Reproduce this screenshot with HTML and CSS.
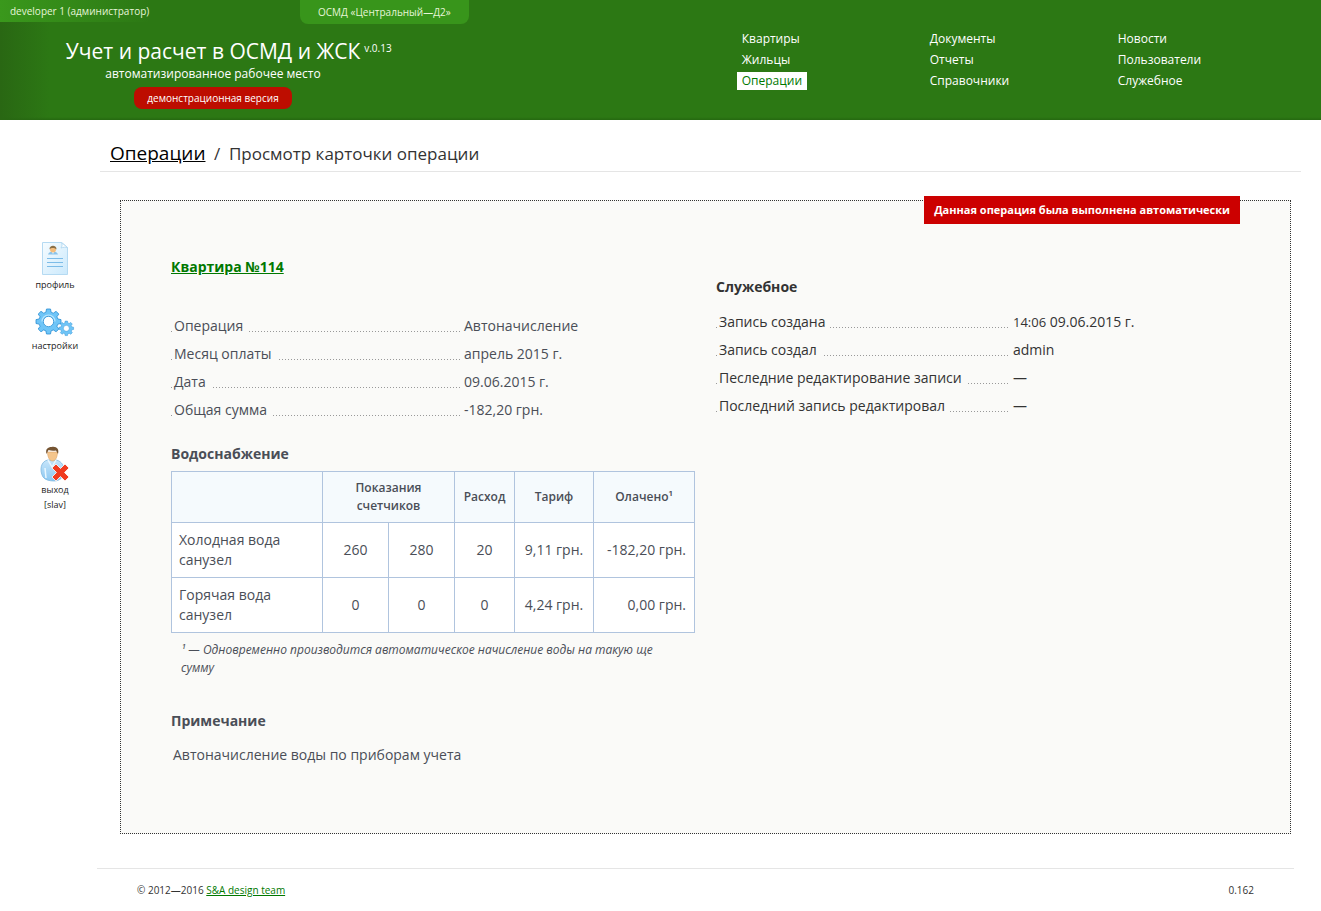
FILE: index.html
```html
<!DOCTYPE html>
<html lang="ru">
<head>
    <meta charset="UTF-8">
    <meta name="viewport" content="width=device-width, initial-scale=1.0">
    <title>Просмотр карточки операции</title>
    <link rel="stylesheet" href="styles.css">
</head>
<body>
    <header class="header">
        <div class="brand-side">
            <div class="topline">
                <div class="user">developer 1 (администратор)</div>
                <div class="company">ОСМД «Центральный—Д2»</div>
            </div>
            <div class="brand">
                <div class="title">Учет и расчет в ОСМД и ЖСК<sup class="version">v.0.13</sup></div>
                <div class="subtitle">автоматизированное рабочее место</div>
                <div class="demo">демонстрационная версия</div>
            </div>
        </div>
        <nav class="nav">
            <ul>
                <li><a href="#">Квартиры</a></li>
                <li><a href="#">Жильцы</a></li>
                <li><a href="#" class="active">Операции</a></li>
            </ul>
            <ul>
                <li><a href="#">Документы</a></li>
                <li><a href="#">Отчеты</a></li>
                <li><a href="#">Справочники</a></li>
            </ul>
            <ul>
                <li><a href="#">Новости</a></li>
                <li><a href="#">Пользователи</a></li>
                <li><a href="#">Служебное</a></li>
            </ul>
        </nav>
    </header>

    <div class="page">
        <aside class="sidebar">
            <a href="#" class="side-link">
                <svg width="28" height="36" viewBox="0 0 28 36">
                    <defs>
                        <linearGradient id="sheet" x1="0" y1="0" x2="1" y2="1">
                            <stop offset="0" stop-color="#f6fcff"/>
                            <stop offset="1" stop-color="#cbe9fc"/>
                        </linearGradient>
                    </defs>
                    <path d="M1.500 1.500h19l6 5v27h-25z" fill="url(#sheet)" stroke="#b5daf2"/>
                    <path d="M20.500 1.500c1 2 .5 4-.5 5.500 2-.8 4.500-1 6.500-.5z" fill="#fff" stroke="#b5daf2"/>
                    <path d="M7 13.500c.5-2 2.500-3 5-3s4.500 1 5 3z" fill="#8cc4ea"/>
                    <path d="M11 11h2l-1 2z" fill="#fff"/>
                    <circle cx="12" cy="8.500" r="3" fill="#f3bd7d"/>
                    <path d="M8.500 8.500c-.5-5 7.500-5 7 0-1-1.500-5-2.500-7 0z" fill="#8a7048"/>
                    <path d="M6 17.500h16M6 21.500h16M6 25.500h16" stroke="#7cbce8"/>
                </svg>
                <span>профиль</span>
            </a>
            <a href="#" class="side-link">
                <svg width="40" height="30" viewBox="0 0 40 30">
                    <g fill="#6fc5f7" stroke="#2a8ed3" stroke-width=".8">
                        <path id="gear" fill-rule="evenodd" d="M11.500 1h4l.6 3.200 2.200 1 2.800-1.900 2.700 2.800-1.900 2.700 1 2.200 3.100.6v3.900l-3.100.6-1 2.200 1.900 2.700-2.700 2.800-2.800-1.900-2.200 1-.6 3.100h-4l-.6-3.100-2.200-1-2.700 1.900L3.200 21l1.900-2.700-1-2.200-3.100-.6v-3.900l3.100-.6 1-2.200L3.200 6.100 6 3.300l2.700 1.900 2.200-1zM13.500 8.300a5.200 5.200 0 1 0 0 10.400 5.200 5.200 0 0 0 0-10.400z"/>
                        <use href="#gear" transform="translate(23.500 12.500) scale(.58)"/>
                    </g>
                    <path d="M7 13.500a6.500 6.500 0 0 1 13 0" fill="none" stroke="#b9e5fd" stroke-width="1.200"/>
                </svg>
                <span>настройки</span>
            </a>
            <a href="#" class="side-link exit">
                <svg width="30" height="36" viewBox="0 0 30 36">
                    <defs>
                        <linearGradient id="coat" x1="0" y1="0" x2="0" y2="1">
                            <stop offset="0" stop-color="#c6e5fa"/>
                            <stop offset="1" stop-color="#8cc8f2"/>
                        </linearGradient>
                    </defs>
                    <path d="M3 31C-1 24 1 15 8 14h8c6 1 9 7 8 13-1 5-5 8-10 8-4 0-9-1-11-4z" fill="url(#coat)" stroke="#80b9df" stroke-width=".8"/>
                    <path d="M5 22l1 10M8 14l4 7 4-7" fill="none" stroke="#e9f7ff" stroke-width="1.500"/>
                    <path d="M7.500 6c0 5 2 9 5 9s5-4 5-9z" fill="#f4c58c" stroke="#d99b5b" stroke-width=".5"/>
                    <path d="M6.500 8C5 3 8 1 11.500 1c5-1 8 2 6.500 7l-2-3.500c-3 .5-5 .3-7.500-.5z" fill="#755432"/>
                    <path d="M12 22l4-4 4.500 4.500L25 18l4 4-4.500 4.500L29 31l-4 4-4.500-4.500L16 35l-4-4 4.500-4.500z" fill="#f03b20" stroke="#fff" stroke-width=".8"/>
                </svg>
                <span>выход<br>[slav]</span>
            </a>
        </aside>

        <main class="main">
            <h1 class="breadcrumbs"><a href="#">Операции</a> <span>/&nbsp; Просмотр карточки операции</span></h1>

            <div class="card">
                <div class="notice">Данная операция была выполнена автоматически</div>

                <section class="operation">
                    <h2 class="flat"><a href="#">Квартира №114</a></h2>
                    <dl class="props">
                        <div><dt><span>Операция</span></dt><dd>Автоначисление</dd></div>
                        <div><dt><span>Месяц оплаты</span></dt><dd>апрель 2015 г.</dd></div>
                        <div><dt><span>Дата</span></dt><dd>09.06.2015 г.</dd></div>
                        <div><dt><span>Общая сумма</span></dt><dd>-182,20 грн.</dd></div>
                    </dl>

                    <h2>Водоснабжение</h2>
                    <table class="water">
                        <colgroup>
                            <col class="c-name"><col class="c-meter"><col class="c-meter">
                            <col class="c-use"><col class="c-rate"><col class="c-paid">
                        </colgroup>
                        <thead>
                            <tr>
                                <th></th>
                                <th colspan="2">Показания<br>счетчиков</th>
                                <th>Расход</th>
                                <th>Тариф</th>
                                <th>Олачено¹</th>
                            </tr>
                        </thead>
                        <tbody>
                            <tr>
                                <td class="name">Холодная вода<br>санузел</td>
                                <td>260</td>
                                <td>280</td>
                                <td>20</td>
                                <td>9,11 грн.</td>
                                <td class="sum">-182,20 грн.</td>
                            </tr>
                            <tr>
                                <td class="name">Горячая вода<br>санузел</td>
                                <td>0</td>
                                <td>0</td>
                                <td>0</td>
                                <td>4,24 грн.</td>
                                <td class="sum">0,00 грн.</td>
                            </tr>
                        </tbody>
                    </table>
                    <p class="footnote">¹ — Одновременно производится автоматическое начисление воды на такую ще сумму</p>

                    <h2>Примечание</h2>
                    <p class="note">Автоначисление воды по приборам учета</p>
                </section>

                <section class="service">
                    <h2>Служебное</h2>
                    <dl class="props">
                        <div><dt><span>Запись создана</span></dt><dd><small>14:06</small> 09.06.2015 г.</dd></div>
                        <div><dt><span>Запись создал</span></dt><dd>admin</dd></div>
                        <div><dt><span>Песледние редактирование записи</span></dt><dd>—</dd></div>
                        <div><dt><span>Последний запись редактировал</span></dt><dd>—</dd></div>
                    </dl>
                </section>
            </div>
        </main>
    </div>

    <footer class="footer">
        <div>© 2012—2016 <a href="#">S&amp;A design team</a></div>
        <div>0.162</div>
    </footer>
</body>
</html>
```
FILE: styles.css
```css
* {
    box-sizing: border-box;
    margin: 0;
    padding: 0;
}

body {
    font-family: "Trebuchet MS", "Open Sans", "Noto Sans", sans-serif;
    font-size: 14px;
    line-height: 20px;
    color: #333;
    background: #fff;
}

ul {
    list-style: none;
}

/* header */
.header {
    display: flex;
    min-height: 120px;
    color: #fff;
    background: linear-gradient(to right, #296713, rgba(44, 120, 20, 0) 50px),
        linear-gradient(to top, #256810, rgba(44, 120, 20, 0) 3px), #2c7814;
}

.brand-side {
    width: 56%;
}

.topline {
    display: flex;
    align-items: flex-start;
    height: 38px;
    font-size: 10px;
    color: #e6f5d8;
}

.user {
    width: 300px;
    height: 22px;
    padding-left: 10px;
    line-height: 22px;
    background: linear-gradient(to right, #3a981c, #2c7814 150px);
}

.company {
    padding: 0 18px;
    line-height: 24px;
    border-radius: 0 0 8px 8px;
    background: #38951b;
}

.brand {
    width: 426px;
    text-align: center;
}

.title {
    position: relative;
    display: inline-block;
    font-size: 21px;
    line-height: 26px;
}

.version {
    position: absolute;
    top: 0;
    left: 100%;
    padding-left: 4px;
    font-size: 10px;
    line-height: 20px;
}

.subtitle {
    font-size: 12px;
    line-height: 20px;
}

.demo {
    display: inline-block;
    margin-top: 3px;
    padding: 0 13px;
    font-size: 10px;
    line-height: 22px;
    border-radius: 8px;
    background: #bd0d00;
}

.nav {
    display: flex;
    flex: 1;
    padding-top: 28px;
    font-size: 12px;
}

.nav ul {
    width: 188px;
}

.nav li {
    line-height: 21px;
}

.nav a {
    display: inline-block;
    padding: 0 5px;
    line-height: 18px;
    margin-left: -3px;
    color: #fff;
    text-decoration: none;
}

.nav .active {
    color: #007800;
    background: #fff;
}

/* sidebar */
.page {
    display: flex;
}

.sidebar {
    width: 100px;
    padding: 121px 0 0 10px;
    font-size: 9px;
    line-height: 15px;
    text-align: center;
}

.side-link {
    display: block;
    margin-bottom: 16px;
    color: #222;
    text-decoration: none;
}

.side-link svg {
    display: block;
    margin: 0 auto;
}

.side-link.exit {
    padding-top: 77px;
}

/* content */
.main {
    flex: 1;
    padding-right: 20px;
}

.breadcrumbs {
    padding: 20px 10px 3px;
    font-size: 17px;
    font-weight: normal;
    line-height: 28px;
    border-bottom: 1px solid #e5e5e5;
}

.breadcrumbs a {
    font-size: 19px;
    line-height: 20px;
    color: #000;
}

.breadcrumbs span {
    margin-left: 4px;
}

.card {
    position: relative;
    display: flex;
    gap: 21px;
    margin: 28px 10px 0 20px;
    padding: 56px 50px;
    min-height: 634px;
    border: 1px dotted #333;
    background: #fafaf8;
}

.notice {
    position: absolute;
    top: -5px;
    right: 50px;
    padding: 0 10px;
    font-size: 11px;
    font-weight: bold;
    line-height: 28px;
    color: #fff;
    background: #c00;
}

.card h2 {
    font-size: 14px;
    font-weight: bold;
    line-height: 20px;
}

.operation {
    width: 524px;
    color: #4a4e57;
}

.card .flat {
    margin-bottom: 35px;
}

.flat a,
.footer a {
    color: #007800;
}

.props {
    margin-bottom: 20px;
}

.props div {
    display: flex;
    line-height: 28px;
}

/* dotted leader runs under the label, the span covers it */
.props dt {
    width: 290px;
    padding-left: 2px;
    background: repeating-linear-gradient(to right, #999 0, #999 1px, transparent 1px, transparent 3px) 0 19px / 100% 1px no-repeat;
}

.props dt span {
    display: inline-block;
    padding: 0 5px 0 1px;
    background: #fafaf8;
}

.props dd {
    padding-left: 3px;
}

.service {
    flex: 1;
    padding-top: 20px;
}

.service .props {
    margin-top: 11px;
}

.service .props dt {
    width: 294px;
}

.service small {
    font-size: 13px;
    line-height: 20px;
}

.water {
    width: 100%;
    margin-top: 7px;
    table-layout: fixed;
    border-collapse: collapse;
    background: #fff;
}

.water th,
.water td {
    padding: 7px 0;
    text-align: center;
    border: 1px solid #b0c4de;
}

.water th {
    font-size: 12px;
    font-weight: 600;
    line-height: 18px;
    background: #f5fafd;
}

.water .name {
    padding-left: 7px;
    text-align: left;
}

.water .sum {
    padding-right: 8px;
    text-align: right;
}

.c-name {
    width: 151px;
}

.c-meter {
    width: 66px;
}

.c-use {
    width: 60px;
}

.c-rate {
    width: 79px;
}

.footnote {
    padding: 8px 10px 0;
    margin-bottom: 34px;
    font-size: 12px;
    font-style: italic;
    line-height: 18px;
}

.note {
    padding: 14px 2px 0;
}

/* footer */
.footer {
    display: flex;
    justify-content: space-between;
    margin: 34px 27px 0 97px;
    padding: 11px 40px;
    font-size: 10px;
    border-top: 1px solid #e5e5e5;
}
```
